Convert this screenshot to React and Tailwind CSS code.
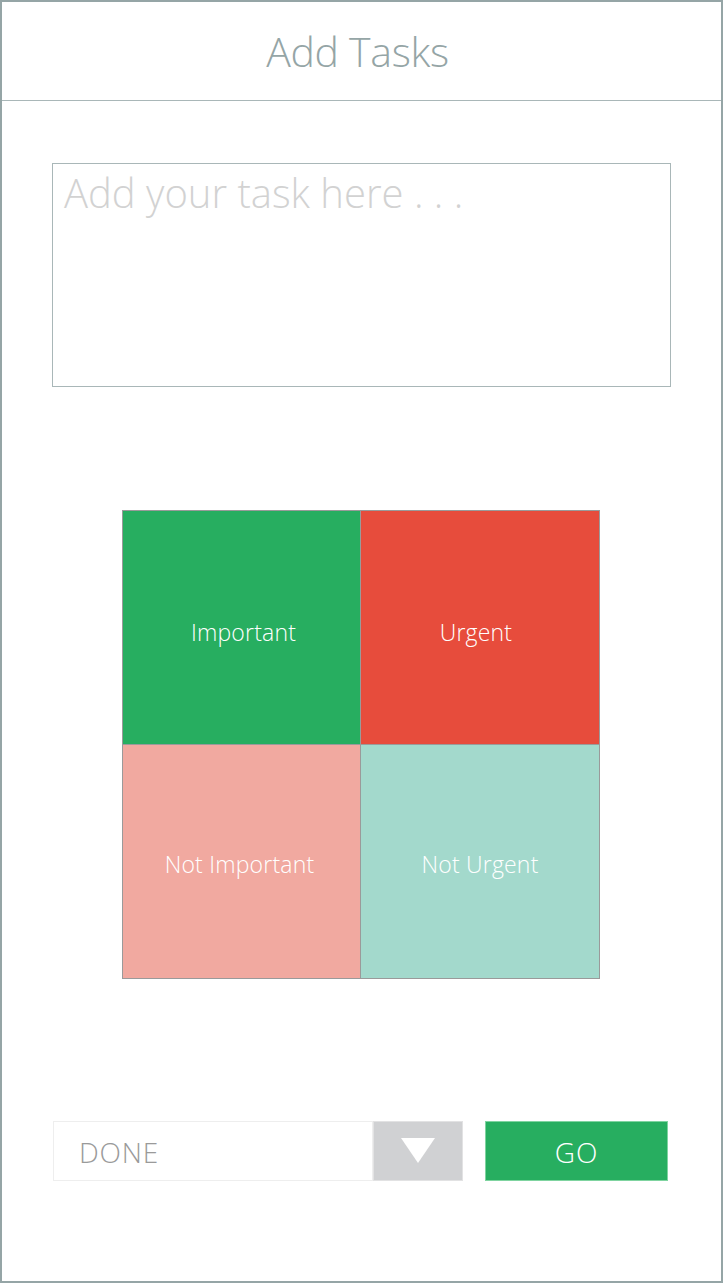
import React, { useState } from "react";

const font = { fontFamily: '"Open Sans", "Noto Sans", sans-serif' };

function Quadrant({ label, className }) {
  return (
    <div
      className={`flex items-center justify-center text-[23px] font-light text-white tracking-[0.2px] ${className}`}
    >
      {label}
    </div>
  );
}

export default function App() {
  const [task, setTask] = useState("");

  return (
    <div
      className="w-[723px] h-[1283px] bg-white border-2 border-[#95a5a6] flex flex-col"
      style={font}
    >
      {/* header */}
      <header className="h-[99px] border-b border-[#a9b7b8] flex items-center justify-center">
        <h1 className="text-[41px] font-light text-[#95a5a6] tracking-[-0.3px] pt-[2px] pr-[8px]">
          Add Tasks
        </h1>
      </header>

      {/* task input */}
      <div className="pl-[50px] pt-[62px]">
        <textarea
          value={task}
          onChange={(e) => setTask(e.target.value)}
          placeholder="Add your task here . . ."
          className="block w-[619px] h-[224px] border border-[#a9b7b8] px-[11px] pt-[1px] text-[40px] font-light text-[#555] placeholder:text-[#d2d2d2] resize-none outline-none leading-[56px]"
        />
      </div>

      {/* priority grid */}
      <div className="pl-[120px] pt-[123px]">
        <div className="w-[478px] h-[469px] border border-[#9a9a9a] grid grid-cols-2 grid-rows-2">
          <Quadrant label="Important" className="bg-[#27ae60] border-r border-b border-[#9a9a9a] pt-[10px] pl-[4px]" />
          <Quadrant label="Urgent" className="bg-[#e74c3c] border-b border-[#9a9a9a] pt-[10px] pr-[8px]" />
          <Quadrant label="Not Important" className="bg-[#f1a9a0] border-r border-[#9a9a9a] pt-[6px] pr-[4px]" />
          <Quadrant label="Not Urgent" className="bg-[#a3d9cc] pt-[6px]" />
        </div>
      </div>

      {/* status + go */}
      <div className="pl-[51px] pt-[142px] flex items-stretch">
        <div className="flex h-[60px]">
          <div className="w-[320px] border border-[#eeeeee] flex items-center pl-[25px] pt-[1px] text-[28px] font-light text-[#9a9a9a] tracking-[0.8px]">
            DONE
          </div>
          <div className="w-[90px] bg-[#d0d1d3] border border-[#e2e2e3] flex items-center justify-center">
            <svg width="34" height="26" viewBox="0 0 34 26">
              <polygon points="0,0 34,0 17,25" fill="#ffffff" />
            </svg>
          </div>
        </div>
        <button className="ml-[22px] w-[183px] h-[60px] pt-[2px] bg-[#27ae60] border border-[#7fd4a0] text-white text-[28px] font-light tracking-[1px]">
          GO
        </button>
      </div>
    </div>
  );
}
